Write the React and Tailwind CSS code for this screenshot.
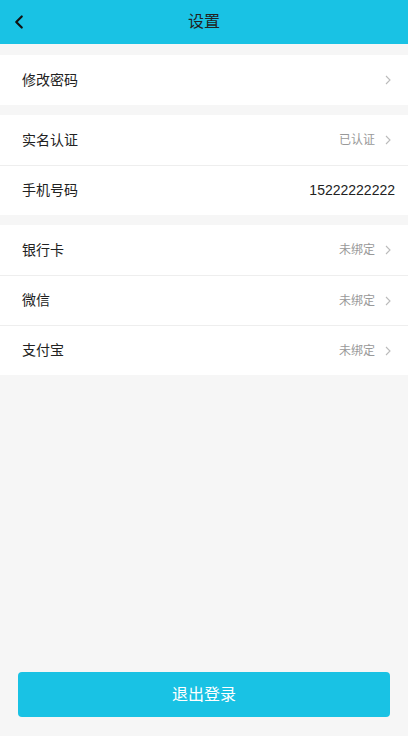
import { ChevronLeft } from "lucide-react";

const font = { fontFamily: '"Liberation Sans", "Noto Sans CJK SC", sans-serif' };

const Arrow = () => (
  <svg width="6" height="10" viewBox="0 0 6 10" className="ml-[10px]" fill="none">
    <path d="M1 1 L5 5 L1 9" stroke="#bbbbbb" strokeWidth="1.1" />
  </svg>
);

const Row = ({ label, value, arrow = true, dark = false, border = false }) => (
  <div className={`flex h-[50px] items-center bg-white pl-[22px] ${arrow ? "pr-[17px]" : "pr-[13px]"} ${border ? "border-t border-[#eeeeee]" : ""}`}>
    <span className="flex-1 text-[14px] text-[#222]">{label}</span>
    {value && (
      <span className={dark ? "text-[14px] text-[#222]" : "text-[12px] text-[#999]"}>{value}</span>
    )}
    {arrow && <Arrow />}
  </div>
);

export default function App() {
  return (
    <div className="flex min-h-screen flex-col bg-[#f6f6f6]" style={font}>
      {/* header */}
      <div className="relative flex h-[44px] items-center justify-center bg-[#19c2e4]">
        <ChevronLeft className="absolute left-[8px] h-[22px] w-[22px] text-[#111]" strokeWidth={2.4} />
        <span className="text-[16px] text-[#222]">设置</span>
      </div>

      <div className="mt-[11px]">
        <Row label="修改密码" />
      </div>

      <div className="mt-[10px]">
        <Row label="实名认证" value="已认证" />
        <Row label="手机号码" value="15222222222" arrow={false} dark border />
      </div>

      <div className="mt-[10px]">
        <Row label="银行卡" value="未绑定" />
        <Row label="微信" value="未绑定" border />
        <Row label="支付宝" value="未绑定" border />
      </div>

      <div className="flex-1" />

      <div className="px-[18px] pb-[19px]">
        <button className="h-[45px] w-full rounded-[4px] bg-[#19c2e4] text-[16px] text-white">
          退出登录
        </button>
      </div>
    </div>
  );
}
